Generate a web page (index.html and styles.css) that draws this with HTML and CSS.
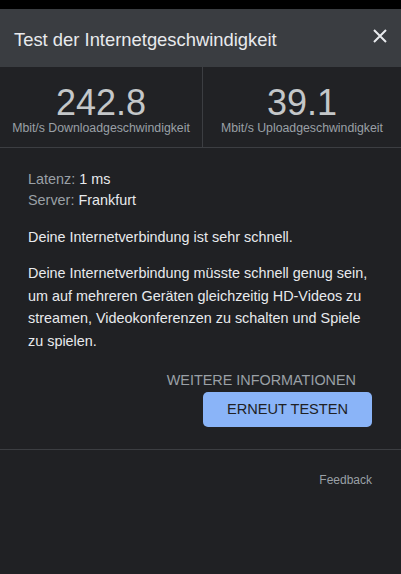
FILE: index.html
```html
<!DOCTYPE html>
<html lang="de">
<head>
    <meta charset="UTF-8">
    <meta name="viewport" content="width=device-width, initial-scale=1.0">
    <title>Test der Internetgeschwindigkeit</title>
    <link rel="stylesheet" href="styles.css">
</head>
<body>
    <div class="topbar"></div>

    <header class="dialog-header">
        <h1>Test der Internetgeschwindigkeit</h1>
        <button class="close" aria-label="Schließen">
            <svg width="14" height="14" viewBox="0 0 14 14">
                <path d="M1 1 L13 13 M13 1 L1 13" stroke="#e8eaed" stroke-width="2" fill="none"/>
            </svg>
        </button>
    </header>

    <section class="stats">
        <div class="stat">
            <div class="value">242.8</div>
            <div class="unit">Mbit/s Downloadgeschwindigkeit</div>
        </div>
        <div class="stat">
            <div class="value">39.1</div>
            <div class="unit">Mbit/s Uploadgeschwindigkeit</div>
        </div>
    </section>

    <section class="details">
        <div class="meta">
            <div><span class="label">Latenz:</span> 1 ms</div>
            <div><span class="label">Server:</span> Frankfurt</div>
        </div>
        <p class="summary">Deine Internetverbindung ist sehr schnell.</p>
        <p class="text">Deine Internetverbindung müsste schnell genug sein, um auf mehreren Geräten gleichzeitig HD-Videos zu streamen, Videokonferenzen zu schalten und Spiele zu spielen.</p>
        <div class="actions">
            <a class="more" href="#">WEITERE INFORMATIONEN</a>
            <button class="retry">ERNEUT TESTEN</button>
        </div>
    </section>

    <footer class="footer">
        <a href="#">Feedback</a>
    </footer>
</body>
</html>
```

FILE: styles.css
```css
body {
    font-family: "Liberation Sans", Arial, sans-serif;
    margin: 0;
    padding: 0;
    background-color: #202124;
    color: #e8eaed;
}
.topbar {
    height: 9px;
    background: #000;
}
.dialog-header {
    display: flex;
    align-items: center;
    justify-content: space-between;
    height: 58px;
    padding: 0 14px;
    background: #3a3d41;
}
.dialog-header h1 {
    margin: 0;
    font-size: 18.4px;
    font-weight: normal;
    color: #e8eaed;
    padding-top: 3px;
}
.close {
    background: none;
    border: 0;
    padding: 0;
    margin-top: -4px;
    display: flex;
}
.stats {
    display: grid;
    grid-template-columns: 202px 1fr;
    border-bottom: 1px solid #3c3e42;
    background: #212225;
}
.stat {
    height: 80px;
    text-align: center;
    padding-top: 18px;
    box-sizing: border-box;
}
.stat + .stat {
    border-left: 1px solid #3c3e42;
}
.value {
    font-size: 36px;
    line-height: 36px;
    color: #c4c7c9;
}
.unit {
    font-size: 12.3px;
    color: #9aa0a6;
    margin-top: 0;
}
.details {
    padding: 21px 29px 22px 28px;
    border-bottom: 1px solid #3c3e42;
    font-size: 14.4px;
}
.meta {
    line-height: 21px;
}
.label {
    color: #9aa0a6;
}
.summary {
    margin: 15px 0 0;
    line-height: 23px;
}
.text {
    margin: 13px 0 0;
    line-height: 22.7px;
}
.actions {
    display: flex;
    flex-direction: column;
    align-items: flex-end;
    margin-top: 19px;
}
.more {
    color: #9aa0a6;
    text-decoration: none;
    font-size: 14.4px;
    margin-right: 16px;
}
.retry {
    margin-top: 4px;
    width: 169px;
    height: 35px;
    background: #8ab4f8;
    border: 0;
    border-radius: 5px;
    font-family: inherit;
    font-size: 14.6px;
    color: #202124;
}
.footer {
    display: flex;
    justify-content: flex-end;
    padding: 23px 29px;
}
.footer a {
    color: #9aa0a6;
    text-decoration: none;
    font-size: 12px;
}
```
